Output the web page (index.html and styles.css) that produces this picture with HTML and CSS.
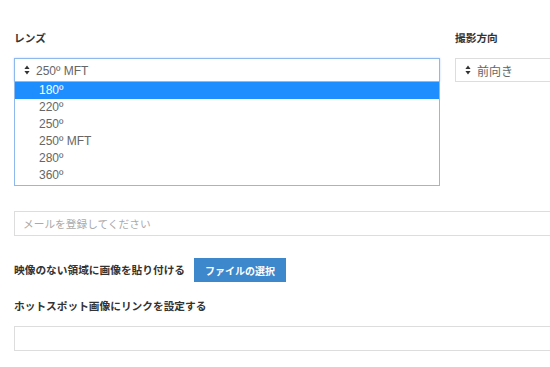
FILE: index.html
```html
<!DOCTYPE html>
<html>
<head>
  <title>Hotspot Settings</title>
  <link rel="stylesheet" href="styles.css">
</head>
<body>
  <div class="page">
    <div class="form">
      <div class="row">
        <div class="group lens">
          <label class="label">レンズ</label>
          <div class="select focused">
            <svg class="arrows" width="6" height="10" viewBox="0 0 6 10"><path d="M3 0.5L5.6 4H0.4z M3 9.5L5.6 6H0.4z" fill="#333"/></svg>
            <span class="value">250º MFT</span>
            <ul class="options">
              <li class="selected">180º</li>
              <li>220º</li>
              <li>250º</li>
              <li>250º MFT</li>
              <li>280º</li>
              <li>360º</li>
            </ul>
          </div>
        </div>
        <div class="group direction">
          <label class="label">撮影方向</label>
          <div class="select">
            <svg class="arrows" width="6" height="10" viewBox="0 0 6 10"><path d="M3 0.5L5.6 4H0.4z M3 9.5L5.6 6H0.4z" fill="#333"/></svg>
            <span class="value">前向き</span>
          </div>
        </div>
      </div>

      <input class="input email" type="text" placeholder="メールを登録してください">

      <div class="upload">
        <span class="label">映像のない領域に画像を貼り付ける</span>
        <button class="btn">ファイルの選択</button>
      </div>

      <label class="label link-label">ホットスポット画像にリンクを設定する</label>
      <input class="input" type="text">
    </div>
  </div>
</body>
</html>
```

FILE: styles.css
```css
body { margin: 0; padding: 0; background: #fff; font-family: "Liberation Sans", "Noto Sans CJK JP", sans-serif; color: #555; }
.page { width: 550px; height: 367px; overflow: hidden; }
.form { width: 620px; padding: 30px 0 0 14px; }
.label { display: block; font-size: 10.7px; line-height: 16px; font-weight: bold; color: #333; }
.row { display: flex; gap: 15px; }
.group .label { margin-bottom: 12px; }
.lens { width: 426px; }
.direction { width: 160px; }
.select { position: relative; box-sizing: border-box; height: 24px; border: 1px solid #ddd; display: flex; align-items: center; gap: 6px; padding: 1px 0 0 9px; background: #fff; font-size: 12px; color: #666; }
.select.focused { border-color: #8fb8ec; box-shadow: 0 0 2px #b7d4f7; }
.arrows { flex: none; margin-top: -1px; }
.options { position: absolute; left: -1px; right: -1px; top: 23px; margin: 0; padding: 0 0 1px; list-style: none; background: #fff; border: 1px solid #8fb8ec; border-top: none; }
.options li { height: 17px; line-height: 17px; padding-left: 24px; font-size: 12px; color: #666; }
.options li.selected { background: #1e8eff; color: #fff; }
.input { display: block; box-sizing: border-box; width: 600px; height: 25px; margin: 0; border: 1px solid #ddd; padding: 0 8px; font-family: "Noto Sans CJK JP", sans-serif; font-size: 10.7px; color: #555; outline: none; }
.input::placeholder { color: #aaa; }
.email { margin-top: 129px; }
.upload { display: flex; align-items: center; gap: 9px; margin-top: 22px; }
.btn { width: 92px; height: 24px; border: none; background: #3d87cc; color: #fff; font-family: "Noto Sans CJK JP", sans-serif; font-size: 10px; font-weight: bold; padding: 0; }
.link-label { margin-top: 16px; margin-bottom: 12px; }
```
